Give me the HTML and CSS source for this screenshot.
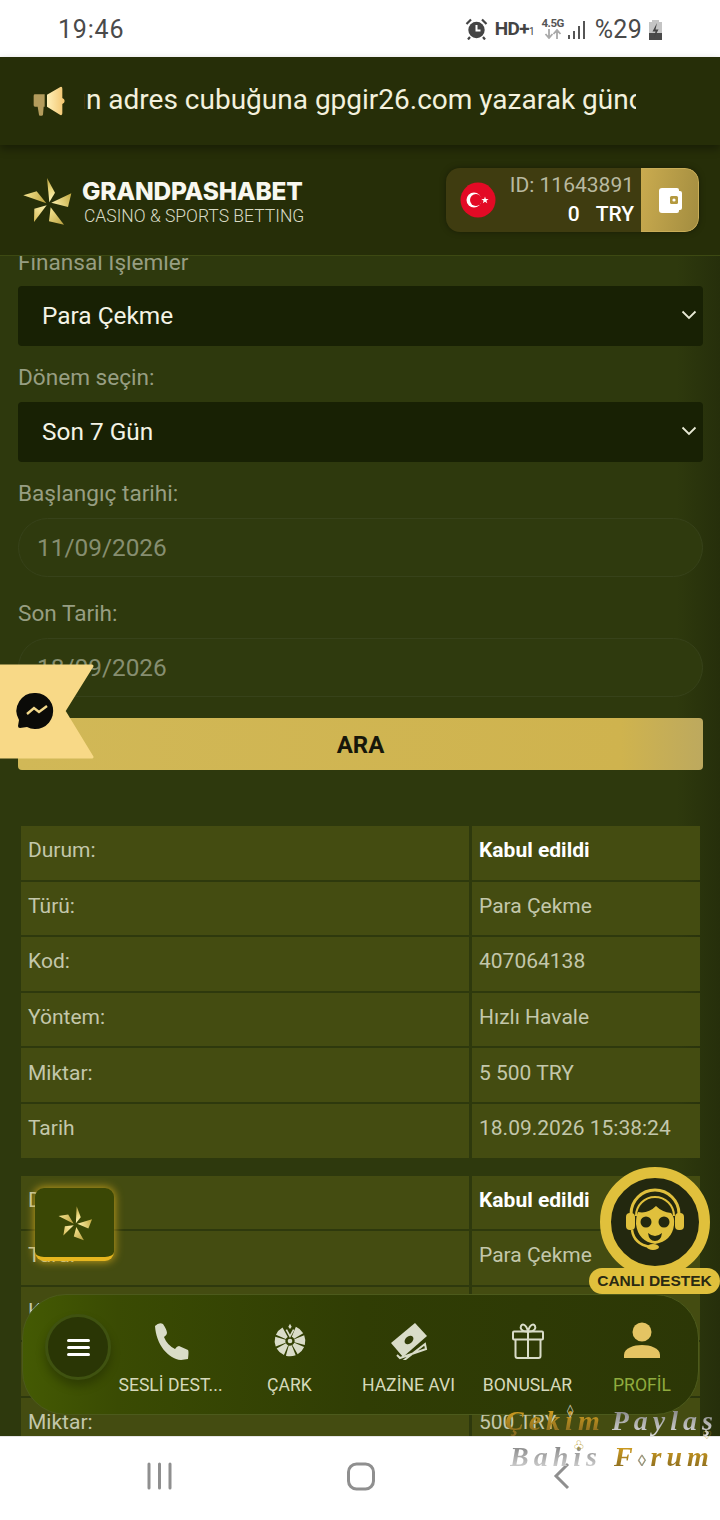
FILE: index.html
```html
<!DOCTYPE html>
<html lang="tr">
<head>
<meta charset="utf-8">
<title>Finansal İşlemler</title>
<link rel="stylesheet" href="styles.css">
</head>
<body>
<div class="page">
  <svg width="0" height="0" class="defs">
    <defs>
      <linearGradient id="ga" gradientUnits="userSpaceOnUse" x1="85" y1="20" x2="105" y2="90"><stop offset="0" stop-color="#b8a03f"/><stop offset=".5" stop-color="#ecd97e"/><stop offset="1" stop-color="#fff6c0"/></linearGradient>
      <linearGradient id="gb" gradientUnits="userSpaceOnUse" x1="160" y1="64" x2="100" y2="95"><stop offset="0" stop-color="#c2a93f"/><stop offset="1" stop-color="#fff2ae"/></linearGradient>
      <linearGradient id="gc" gradientUnits="userSpaceOnUse" x1="138" y1="158" x2="92" y2="110"><stop offset="0" stop-color="#b8a03f"/><stop offset="1" stop-color="#fbe995"/></linearGradient>
      <linearGradient id="gd" gradientUnits="userSpaceOnUse" x1="48" y1="150" x2="86" y2="100"><stop offset="0" stop-color="#d6bc55"/><stop offset="1" stop-color="#fff3b5"/></linearGradient>
      <linearGradient id="ge" gradientUnits="userSpaceOnUse" x1="16" y1="70" x2="84" y2="90"><stop offset="0" stop-color="#f7e691"/><stop offset="1" stop-color="#bba23f"/></linearGradient>
      <g id="star">
        <path d="M87 18L111 62 94 91Z" fill="url(#ga)"/>
        <path d="M160 64L100 92 150 105Z" fill="url(#gb)"/>
        <path d="M138 158L98 106 93 148Z" fill="url(#gc)"/>
        <path d="M48 150L86 100 49 110Z" fill="url(#gd)"/>
        <path d="M16 70L56 58 85 94Z" fill="url(#ge)"/>
      </g>
    </defs>
  </svg>

  <div class="status">
    <span class="clock">19:46</span>
    <div class="status-right">
      <svg class="alarm" width="23" height="22" viewBox="0 0 23 22"><circle cx="11.500" cy="12" r="8.200" fill="#444"/><path d="M11.500 7v5.500h4" fill="none" stroke="#fff" stroke-width="2"/><path d="M1.500 6 L6 1.500 M21.500 6 L17 1.500 M5 19l-2 2.500 M18 19l2 2.500" stroke="#444" stroke-width="2.200" fill="none"/></svg>
      <span class="hd">HD+<small>1</small></span>
      <span class="net"><b>4.5G</b><svg width="20" height="10" viewBox="0 0 20 10"><path d="M6 0v8M2.500 5L6 9l3.500-4M14 10V2M10.500 5L14 1l3.500 4" fill="none" stroke="#aaa" stroke-width="1.800"/></svg></span>
      <svg width="19" height="22" viewBox="0 0 19 22"><path d="M2 16v4M7 12v8M12 7v13M17 2v18" stroke="#555" stroke-width="2" fill="none"/></svg>
      <span class="pct">%29</span>
      <svg width="15" height="22" viewBox="0 0 15 22"><path d="M4 1h7v2h3v18H1V3h3z" fill="#c4c4c4"/><path d="M1 14h13v7H1z" fill="#4a4a4a"/><path d="M9 4L4.500 12.500h3L6 19l4.500-8.500h-3z" fill="#444"/></svg>
    </div>
  </div>

  <div class="notice">
    <svg class="mega" width="50" height="50" viewBox="0 0 150 150"><defs><linearGradient id="mg" x1="0" x2="1"><stop offset="0" stop-color="#fff0b8"/><stop offset="1" stop-color="#f2c46e"/></linearGradient></defs><path d="M30 55H59V92H56L54 116Q53 119 50 119H45Q42 119 42 116L38 92H30Q26 92 26 88V59Q26 55 30 55Z" fill="#b39c5c"/><path d="M66 56L106 33Q112 31 112 38V66Q119 69 119 75T112 84V112Q112 119 106 117L66 92Z" fill="url(#mg)"/></svg>
    <div class="ticker"><span class="ticker-text">ın adres cubuğuna gpgir26.com yazarak güncel adresimize ulaşabilirsiniz</span></div>
  </div>

  <header class="header">
    <div class="brand">
      <svg class="logo" width="60" height="60" viewBox="0 0 180 180"><use href="#star"/></svg>
      <div class="brand-text">
        <div class="brand-name">GRANDPASHABET</div>
        <div class="brand-sub">CASINO &amp; SPORTS BETTING</div>
      </div>
    </div>
    <div class="balance">
      <svg class="flag" width="36" height="36" viewBox="0 0 36 36"><circle cx="18" cy="18" r="17.500" fill="#e30a25"/><circle cx="14" cy="18" r="7.500" fill="#fff"/><circle cx="16" cy="18" r="6" fill="#e30a25"/><path d="M25 14.500l.9 2.600 2.700 0-2.200 1.600.9 2.600-2.300-1.600-2.200 1.600.8-2.600-2.200-1.600 2.700 0z" fill="#fff"/></svg>
      <div class="balance-text">
        <div class="bal-id">ID: 11643891</div>
        <div class="bal-sum"><span>0</span><span>TRY</span></div>
      </div>
      <div class="wallet">
        <svg width="26" height="26" viewBox="0 0 26 26"><path d="M5 1h15q2 0 2 2v1h1q2 0 2 2v15q0 2-2 2h-1v1q0 2-2 2H5q-3 0-3-3V4q0-3 3-3z" fill="#fff"/><rect x="13" y="9" width="8" height="8" rx="1.500" fill="#b4993f"/><circle cx="17" cy="13" r="1.600" fill="#fff"/></svg>
      </div>
    </div>
  </header>

  <main class="main">
    <label class="label first">Finansal İşlemler</label>
    <div class="select"><span>Para Çekme</span><svg width="16" height="10" viewBox="0 0 16 10"><path d="M1.500 1.500L8 8l6.500-6.500" fill="none" stroke="#e8ead6" stroke-width="1.800"/></svg></div>
    <label class="label">Dönem seçin:</label>
    <div class="select"><span>Son 7 Gün</span><svg width="16" height="10" viewBox="0 0 16 10"><path d="M1.500 1.500L8 8l6.500-6.500" fill="none" stroke="#e8ead6" stroke-width="1.800"/></svg></div>
    <label class="label">Başlangıç tarihi:</label>
    <div class="input">11/09/2026</div>
    <label class="label">Son Tarih:</label>
    <div class="input">18/09/2026</div>
    <button class="search">ARA</button>

    <table class="record">
      <tr><td>Durum:</td><td class="strong">Kabul edildi</td></tr>
      <tr><td>Türü:</td><td>Para Çekme</td></tr>
      <tr><td>Kod:</td><td>407064138</td></tr>
      <tr><td>Yöntem:</td><td>Hızlı Havale</td></tr>
      <tr><td>Miktar:</td><td>5 500 TRY</td></tr>
      <tr><td>Tarih</td><td>18.09.2026 15:38:24</td></tr>
    </table>
    <table class="record">
      <tr><td>Durum:</td><td class="strong">Kabul edildi</td></tr>
      <tr><td>Türü:</td><td>Para Çekme</td></tr>
      <tr><td>Kod:</td><td>407064138</td></tr>
      <tr><td>Yöntem:</td><td>Hızlı Havale</td></tr>
      <tr><td>Miktar:</td><td>500 TRY</td></tr>
    </table>
  </main>

  <div class="sysnav">
    <svg class="sys-recent" width="27" height="28" viewBox="0 0 27 28"><path d="M3 2v24M13.500 2v24M24 2v24" stroke="#8f8f8f" stroke-width="3" stroke-linecap="round" fill="none"/></svg>
    <svg class="sys-home" width="30" height="30" viewBox="0 0 30 30"><rect x="2.500" y="3" width="25" height="25" rx="8" fill="none" stroke="#8f8f8f" stroke-width="3"/></svg>
    <svg class="sys-back" width="18" height="28" viewBox="0 0 18 28"><path d="M15 2L3 14l12 12" stroke="#8f8f8f" stroke-width="3" fill="none"/></svg>
  </div>

  <svg class="ribbon" width="96" height="96" viewBox="0 0 96 96"><path d="M-4 2H91L63 47 91 93H-4z" fill="#f8d987" stroke="#f8d987" stroke-width="3" stroke-linejoin="round"/><path d="M35 29a18 18 0 1 1-9 34l-7 1q-2 0-2-2l1-6a18 18 0 0 1 17-27z" fill="#0b0b08"/><path d="M26 50l7-6 5 4 8-6" fill="none" stroke="#f3d98b" stroke-width="2.400"/></svg>

  <div class="starbtn"><svg width="42" height="42" viewBox="0 0 180 180"><use href="#star" transform="rotate(8 90 90)"/></svg></div>

  <div class="support">
    <div class="support-ring">
      <svg width="66" height="72" viewBox="0 0 66 72"><path d="M9 36V28a24 24 0 0 1 48 0v8" fill="none" stroke="#e0c03c" stroke-width="3"/><path d="M14 30a19 19 0 0 1 38 0" fill="none" stroke="#e0c03c" stroke-width="2"/><rect x="4" y="27" width="9" height="17" rx="4" fill="#e0c03c"/><rect x="53" y="27" width="9" height="17" rx="4" fill="#e0c03c"/><path d="M16 26q10 2 18-6 6 6 15 7 4 4 3 12-2 16-19 19-17-3-19-20 0-8 2-12z" fill="#e0c03c"/><circle cx="24" cy="36" r="5.500" fill="#23280f"/><circle cx="42" cy="36" r="5.500" fill="#23280f"/><path d="M26 47q7 6 14 0-1 8-7 8t-7-8z" fill="#23280f"/><path d="M10 44q2 14 18 17" fill="none" stroke="#e0c03c" stroke-width="2.500"/><ellipse cx="31" cy="61" rx="6" ry="3" fill="#e0c03c"/></svg>
    </div>
    <div class="support-pill">CANLI DESTEK</div>
  </div>

  <nav class="tabbar">
    <div class="menu-btn"><span></span><span></span><span></span></div>
    <div class="tab">
      <svg width="38" height="38" viewBox="0 0 38 38"><path d="M3 4q4-4 8-2 4 6 4 9 0 2-3 4 3 8 11 12 2-3 4-3l9 4q1 1 0 9l-7 1C16 37 4 22 3 4z" fill="#d9dcc8"/></svg>
      <span>SESLİ DEST...</span>
    </div>
    <div class="tab">
      <svg width="38" height="38" viewBox="11 19 114 114"><circle cx="68" cy="76" r="30" fill="none" stroke="#d9dcc8" stroke-width="32" pathLength="360" stroke-dasharray="37 8 37 8 37 8 37 8 37 8 37 8 37 53" transform="rotate(-67.500 68 76)"/><circle cx="68" cy="76" r="7" fill="#d9dcc8"/><path d="M68 24l5 9-5 7-5-7z" fill="#d9dcc8"/><path d="M57 42L68 62 79 42" fill="none" stroke="#d9dcc8" stroke-width="5"/></svg>
      <span>ÇARK</span>
    </div>
    <div class="tab">
      <svg width="38" height="38" viewBox="0 0 38 38"><path d="M1 21L25 1l12 13-24 21z" fill="#d9dcc8"/><ellipse cx="19" cy="18" rx="5" ry="3.500" transform="rotate(-40 19 18)" fill="#333e08"/><path d="M7 33l3 3 26-9-1-5-22 17" fill="none" stroke="#d9dcc8" stroke-width="2"/></svg>
      <span>HAZİNE AVI</span>
    </div>
    <div class="tab">
      <svg width="34" height="38" viewBox="0 0 34 38"><g fill="none" stroke="#d9dcc8" stroke-width="2"><rect x="2" y="9.500" width="30" height="8" rx="1"/><path d="M4.500 17.500V34q0 2 2 2h21q2 0 2-2V17.500M17 9.500V36"/><path d="M17 9.500C10 10 9 6 10 4s5-3 7 5.500zM17 9.500C24 10 25 6 24 4s-5-3-7 5.500z"/></g></svg>
      <span>BONUSLAR</span>
    </div>
    <div class="tab active">
      <svg width="38" height="38" viewBox="0 0 38 38"><circle cx="19" cy="10" r="9.500" fill="#e4c463"/><path d="M1 36v-3c0-7 10-10 18-10s18 3 18 10v3z" fill="#e4c463"/></svg>
      <span>PROFİL</span>
    </div>
  </nav>

  <div class="watermark">
    <div class="wm-line"><span class="wm-gold">Çekim</span> <span class="wm-grey">Paylaş</span></div>
    <div class="wm-line two"><span class="wm-grey">Bahis</span> <span class="wm-gold">F<em>◊</em>rum</span></div>
    <span class="deco deco-a">◊</span>
    <span class="deco deco-b">♧</span>
    <span class="deco deco-c">♡</span>
  </div>
</div>
</body>
</html>
```
FILE: styles.css
```css
* { box-sizing: border-box; }
html, body { margin: 0; padding: 0; }
body { font-family: Roboto, "Liberation Sans", sans-serif; background: #fff; }
.defs { position: absolute; }
.page { position: relative; width: 720px; height: 1520px; overflow: hidden; display: flex; flex-direction: column; }

.status { height: 57px; flex: none; background: #fff; display: flex; align-items: center; justify-content: space-between; padding: 2px 57px 0 58px; color: #4a4a4a; }
.clock { font-size: 25px; letter-spacing: .8px; }
.status-right { display: flex; align-items: center; }
.alarm { margin-right: 7px; margin-top: -2px; }
.hd { font-size: 19px; font-weight: 700; color: #444; width: 44px; letter-spacing: -.6px; margin-top: -2px; }
.hd small { font-size: 10px; font-weight: 400; }
.net { display: flex; flex-direction: column; align-items: center; width: 28px; line-height: 11px; margin-top: -3px; }
.net b { font-size: 11.500px; font-weight: 700; color: #555; letter-spacing: -.5px; }
.pct { font-size: 25px; margin: 0 6px 0 9px; letter-spacing: .3px; color: #4a4a4a; }

.notice { height: 88px; flex: none; background: #262e08; display: flex; align-items: center; padding-left: 25px; box-shadow: 0 4px 8px rgba(0,0,0,.35); position: relative; z-index: 2; }
.ticker { width: 552px; margin-left: 9px; margin-top: -2px; overflow: hidden; white-space: nowrap; }
.ticker-text { display: inline-block; margin-left: -5px; font-size: 28px; color: #f3f1dd; line-height: 36px; }

.header { height: 111px; flex: none; background: #262e08; border-bottom: 1px solid #3d4912; display: flex; align-items: center; justify-content: space-between; padding: 0 21px 0 18px; }
.brand { display: flex; align-items: center; gap: 4px; margin-top: 2px; }
.logo { margin-top: 2px; }
.brand-text { display: flex; flex-direction: column; padding-top: 3px; }
.brand-name { font-family: Inter, sans-serif; font-weight: 800; font-size: 24.500px; line-height: 29px; color: #f8f8ef; letter-spacing: -.2px; }
.brand-sub { font-family: Roboto, sans-serif; font-weight: 300; font-size: 17.500px; line-height: 24px; margin-top: -2px; color: #d8dac4; margin-left: 2px; }
.balance { width: 253px; height: 64px; border-radius: 14px; background: #3f3c10; display: flex; align-items: center; padding-left: 14px; overflow: hidden; box-shadow: 0 0 6px rgba(0,0,0,.35); }
.balance-text { flex: 1; text-align: right; padding-right: 7px; margin-top: -2px; }
.bal-id { font-size: 21px; line-height: 30px; color: #b9b9a0; }
.bal-sum { font-size: 21px; line-height: 28px; color: #fff; font-weight: 500; display: flex; justify-content: flex-end; gap: 16px; }
.wallet { width: 58px; height: 64px; background: linear-gradient(100deg, #caab4f, #a38d40); border: 1px solid #c9ad58; border-left: 0; border-radius: 0 14px 14px 0; display: flex; align-items: center; justify-content: center; }

.main { flex: 1; min-height: 0; overflow: hidden; padding: 0 17px 0 18px; background: linear-gradient(90deg, #2e390d 0, #2e390d 94%, #262f0b 100%); }
.label { display: block; font-size: 22.600px; line-height: 26px; color: #979e82; margin-top: 19px; margin-bottom: 11px; }
.label.first { margin-top: -6px; margin-bottom: 10px; }
.select { height: 60px; border-radius: 4px; background: #182104; display: flex; align-items: center; justify-content: space-between; padding: 0 6px 2px 24px; font-size: 24.400px; color: #f4f4e6; }
.input { height: 59px; border-radius: 30px; border: 1px solid #37421a; background: #2f3a0e; display: flex; align-items: center; padding: 0 0 1px 18px; font-size: 24.400px; color: #868e70; }
.input + .label { margin-top: 24px; }
.search { display: block; width: 100%; height: 52px; margin-top: 21px; padding: 2px 0 0; border: 0; border-radius: 4px; background: linear-gradient(90deg, #d1b857 0, #cfb34e 88%, #bda95e 100%); color: #17170a; font: 700 24px Roboto, sans-serif; }
.record { width: 685px; border-collapse: separate; border-spacing: 3px 2px; table-layout: fixed; margin: 0; }
.search + .record { margin-top: 54px; }
.record + .record { margin-top: 14px; }
.record td { height: 53.600px; padding: 0 7px 5px; background: #444c11; color: #c3c7ab; font-size: 21px; }
.record td:first-child { width: 448px; }
.record td.strong { color: #fff; font-weight: 700; font-size: 21px; }

.sysnav { height: 84px; flex: none; background: #fff; border-top: 1px solid #e6e6e6; display: flex; align-items: flex-start; padding: 25px 0 0 146px; }
.sys-home { margin-left: 173px; margin-top: -1px; }
.sys-back { margin-left: 177px; }

.ribbon { position: absolute; left: 1px; top: 664px; overflow: visible; }

.starbtn { position: absolute; left: 35px; top: 1188px; width: 79px; height: 73px; border-radius: 9px; background: #3a4705; border-bottom: 4px solid #e6b61f; box-shadow: 0 0 9px 1px rgba(224,178,30,.75); display: flex; align-items: center; justify-content: center; }

.support { position: absolute; left: 589px; top: 1167px; width: 131px; height: 127px; }
.support-ring { position: absolute; left: 11px; top: 0; width: 110px; height: 110px; border-radius: 50%; background: #23280f; border: 11px solid #e0c03c; display: flex; align-items: center; justify-content: center; }
.support-pill { position: absolute; left: 0; bottom: 0; width: 131px; height: 26px; border-radius: 13px; background: #e0c03c; color: #2a2a12; font: 700 15.500px/26px "Liberation Sans", sans-serif; text-align: center; white-space: nowrap; }

.tabbar { position: absolute; left: 22px; top: 1294px; width: 677px; height: 121px; border-radius: 44px; border: 1px solid #4c5a1c; background: linear-gradient(90deg, #445a03 0, #3a4b03 14%, #303d04 50%, #2c3706 100%); display: flex; align-items: flex-start; padding-left: 22px; }
.menu-btn { flex: none; width: 66px; height: 66px; margin-top: 19px; border-radius: 50%; background: #2a3605; border: 3px solid #3f5210; box-shadow: 0 6px 10px rgba(0,0,0,.25); display: flex; flex-direction: column; align-items: center; justify-content: center; gap: 4px; }
.menu-btn span { width: 23px; height: 3px; background: #fff; border-radius: 2px; }
.tab { flex: none; width: 119px; display: flex; flex-direction: column; align-items: center; padding-top: 27px; color: #d6d9bb; font-size: 17.600px; white-space: nowrap; }
.tab span { margin-top: 13px; line-height: 24px; }
.tab.active { width: 110px; color: #90ab3e; }

.watermark { position: absolute; left: 505px; top: 1404px; width: 215px; height: 76px; font-family: "Liberation Serif", serif; font-style: italic; font-weight: 700; font-size: 28px; letter-spacing: 5px; white-space: nowrap; }
.wm-line { line-height: 34px; word-spacing: -5px; }
.wm-line.two { margin-top: 2px; margin-left: 5px; word-spacing: 0; }
.wm-gold { background: linear-gradient(180deg, #e0a820, #80651f); -webkit-background-clip: text; background-clip: text; color: transparent; }
.wm-grey { background: linear-gradient(180deg, #777, #ddd); -webkit-background-clip: text; background-clip: text; color: transparent; }
.wm-gold em { font-size: 16px; color: #999; }
.deco { position: absolute; font-size: 13px; font-style: normal; font-weight: 400; letter-spacing: 0; line-height: 14px; font-family: "DejaVu Sans", sans-serif; }
.deco-a { left: 62px; top: 0; color: #cfcfc0; }
.deco-b { left: 68px; top: 35px; color: #b89a20; }
.deco-c { left: 197px; top: 25px; color: #c9ad40; font-size: 11px; }
```
